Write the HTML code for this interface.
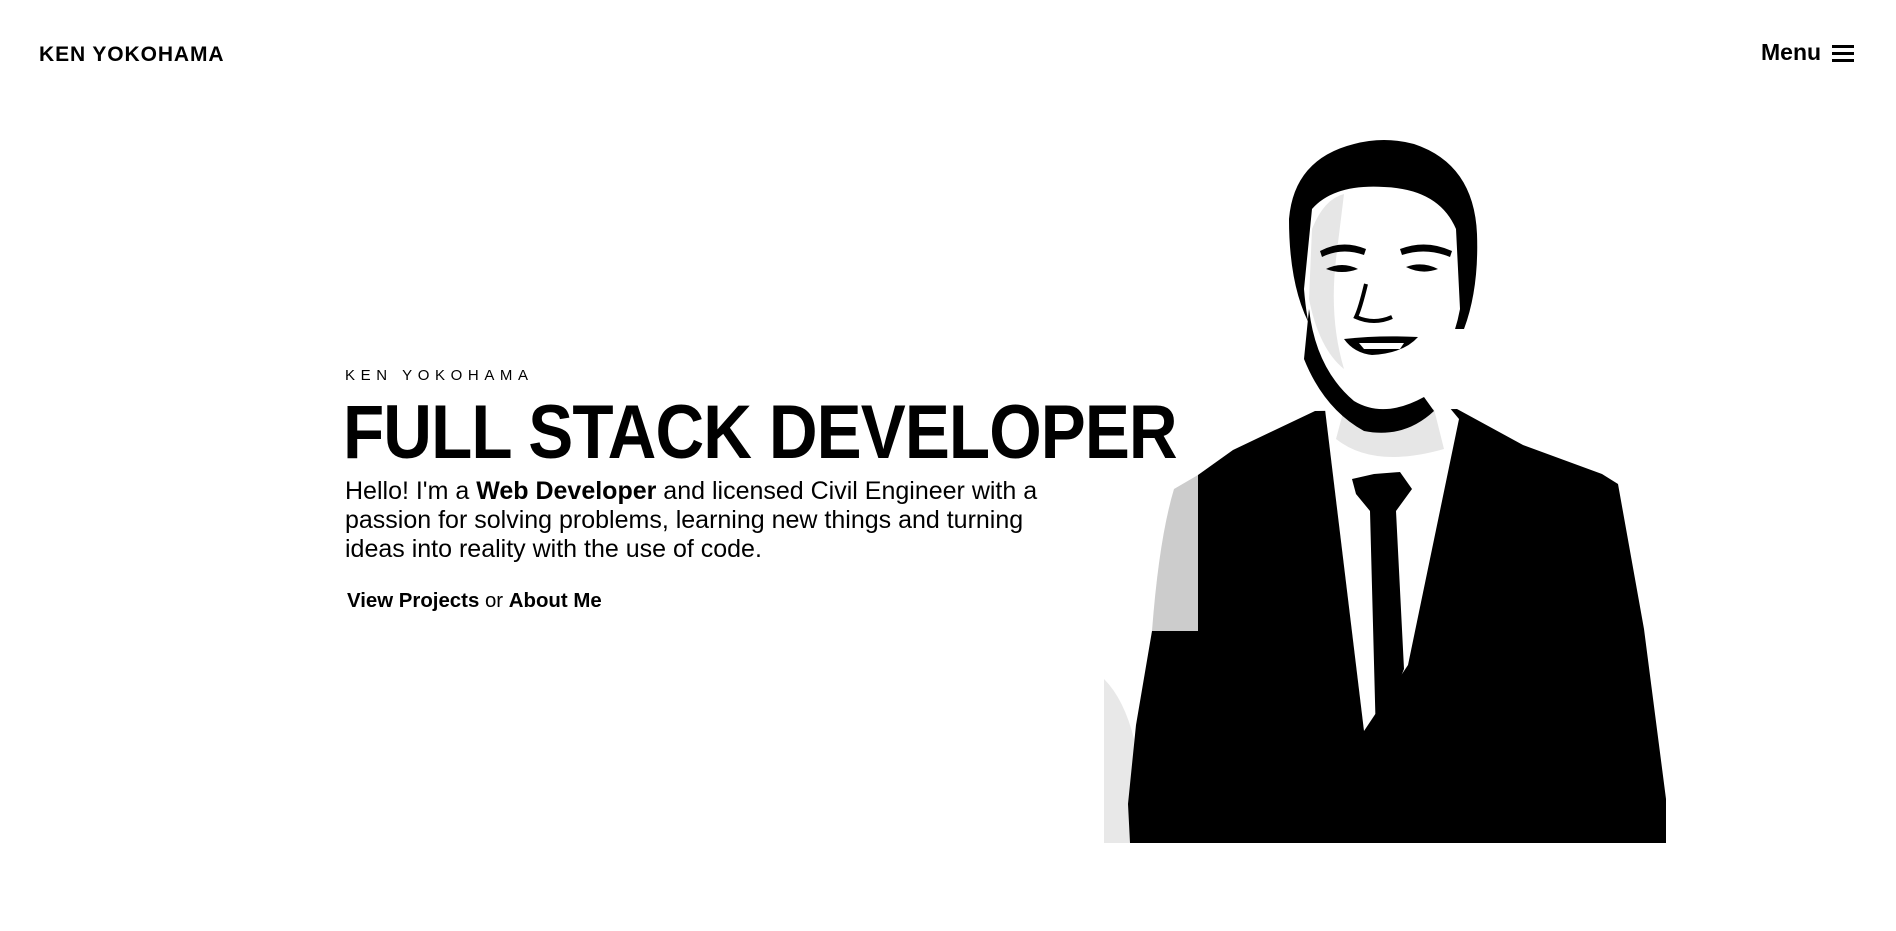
<!DOCTYPE html>
<html><head><meta charset="utf-8"><style>
html,body{margin:0;padding:0;background:#fff;width:1896px;height:931px;overflow:hidden;font-family:"Liberation Sans",sans-serif;color:#000}
.logo{position:absolute;left:39px;top:43px;font-weight:bold;font-size:21px;letter-spacing:0.9px}
.menu{position:absolute;left:1761px;top:39px;font-weight:bold;font-size:23px}
.burger{position:absolute;left:1832px;top:45px;width:22px}
.burger i{display:block;height:3px;background:#000;margin-bottom:4px}
.sub{position:absolute;left:345px;top:367px;font-size:15px;letter-spacing:5.6px}
h1{position:absolute;left:343px;top:389px;margin:0;font-size:76px;font-weight:bold;white-space:nowrap;transform:scaleX(0.887);transform-origin:0 0;letter-spacing:-1px}
.p{position:absolute;left:345px;top:477px;font-size:25px;line-height:29px;white-space:nowrap}
.links{position:absolute;left:347px;top:590px;font-size:20px;white-space:nowrap;transform:scaleX(1.02);transform-origin:0 0}
.links b{font-weight:bold}
svg{position:absolute;left:1104px;top:139px}
</style></head><body>
<div class="logo">KEN YOKOHAMA</div>
<div class="menu">Menu</div>
<div class="burger"><i></i><i></i><i></i></div>
<div class="sub">KEN YOKOHAMA</div>
<h1>FULL STACK DEVELOPER</h1>
<div class="p">Hello! I'm a <b>Web Developer</b> and licensed Civil Engineer with a<br>passion for solving problems, learning new things and turning<br>ideas into reality with the use of code.</div>
<div class="links"><b>View Projects</b> or <b>About Me</b></div>
<svg width="562" height="704" viewBox="0 0 562 704">
<path d="M0 540 Q20 560 30 600 L28 704 L0 704Z" fill="#e8e8e8"/>
<path d="M94 336 L94 492 L48 492 Q55 400 70 350Z" fill="#cccccc"/>
<path d="M211 272 L129 311 L94 336 L94 492 L48 492 L32 586 L24 665 L26 704 L562 704 L562 660 L540 490 L514 345 L498 335 L419 306 L353 270Z" fill="#000"/>
<path d="M220 262 L260 592 L304 526 L355 280 L330 250 L240 250Z" fill="#fff"/>
<path d="M232 300 Q270 330 340 310 L330 270 L240 270Z" fill="#e6e6e6"/>
<path d="M248 340 L270 335 L296 333 L308 350 L292 372 L300 530 L272 600 L266 372 L252 355Z" fill="#000"/>
<path d="M185 80 Q190 20 250 5 Q280 -3 310 5 Q370 25 373 95 Q375 150 360 190 L350 190 L208 190 Q185 150 185 80Z" fill="#000"/>
<path d="M208 70 Q230 45 280 48 Q335 50 352 90 L356 170 Q345 230 300 258 Q260 275 232 250 Q205 215 200 150Z" fill="#fff"/>
<path d="M208 90 Q220 60 240 55 L232 120 Q225 180 240 230 Q215 210 205 160Z" fill="#e6e6e6"/>
<path d="M205 170 Q212 230 250 262 Q280 280 320 258 L330 272 Q300 300 260 292 Q220 270 200 220Z" fill="#000"/>
<path d="M216 112 Q238 100 262 110 L260 116 Q238 108 218 118Z M296 110 Q322 100 348 112 L346 118 Q322 108 298 116Z" fill="#000"/>
<path d="M222 130 Q238 122 254 130 Q238 136 222 130Z M302 128 Q318 122 334 130 Q318 136 302 128Z" fill="#000"/>
<path d="M262 145 Q256 170 252 178 Q270 186 288 178" stroke="#000" stroke-width="4" fill="none"/>
<path d="M240 200 Q275 196 314 198 Q300 214 268 216 Q250 214 240 200Z" fill="#000"/>
<path d="M255 204 L300 204 L296 210 L260 210Z" fill="#fff"/>
</svg>
</body></html>
